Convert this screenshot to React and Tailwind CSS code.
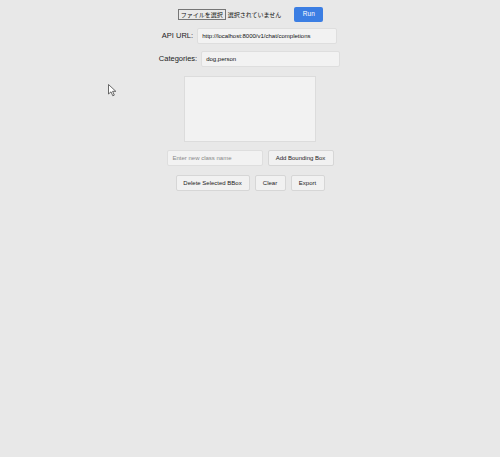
import React from "react";

export default function App() {
  const font = { fontFamily: '"Liberation Sans", Arial, "Noto Sans CJK JP", sans-serif' };
  return (
    <div className="relative w-[500px] h-[457px] bg-[#e8e8e8] text-[#222]" style={font}>
      <div className="flex flex-col items-center pt-[7px]">
        <div className="flex items-center h-[15px] ml-[1px]">
          <div className="flex items-center">
            <span className="h-[11px] px-[2px] flex items-center border border-[#767676] bg-[#e9e9e9] text-[6px] leading-none text-[#111]">ファイルを選択</span>
            <span className="ml-[2px] text-[6px] leading-none text-[#111]">選択されていません</span>
          </div>
          <button className="ml-[13px] w-[29px] h-[15px] rounded-[2px] bg-[#3b7ee3] text-white text-[6.5px] leading-none flex items-center justify-center">Run</button>
        </div>
        <div className="flex items-center mt-[6px] h-[16px] ml-[-1px]">
          <span className="text-[7.5px] text-[#222] mr-[4px]">API URL:</span>
          <div className="w-[140px] h-[16px] bg-[#f2f2f2] border border-[#dedede] rounded-[2px] flex items-center px-[4px] text-[6px] text-[#111]">http://localhost:8000/v1/chat/completions</div>
        </div>
        <div className="flex items-center mt-[7px] h-[16px] ml-[-1px]">
          <span className="text-[7.5px] text-[#222] mr-[4px]">Categories:</span>
          <div className="w-[139px] h-[16px] bg-[#f2f2f2] border border-[#dedede] rounded-[2px] flex items-center px-[4px] text-[6px] text-[#111]">dog,person</div>
        </div>
        <div className="mt-[9px] w-[132px] h-[66px] bg-[#f2f2f2] border border-[#dcdcdc]"></div>
        <div className="flex items-center mt-[8px] gap-[5px]">
          <div className="w-[96px] h-[16px] bg-[#f2f2f2] border border-[#dedede] rounded-[2px] flex items-center px-[5px] text-[6px] text-[#888]">Enter new class name</div>
          <button className="w-[66px] h-[16px] bg-[#f1f1f1] border border-[#d6d6d6] rounded-[2px] flex items-center justify-center text-[6px] text-[#222]">Add Bounding Box</button>
        </div>
        <div className="flex items-center mt-[9px] gap-[5px]">
          <button className="w-[74px] h-[16px] bg-[#f1f1f1] border border-[#d6d6d6] rounded-[2px] flex items-center justify-center text-[6px] text-[#222]">Delete Selected BBox</button>
          <button className="w-[31px] h-[16px] bg-[#f1f1f1] border border-[#d6d6d6] rounded-[2px] flex items-center justify-center text-[6px] text-[#222]">Clear</button>
          <button className="w-[34px] h-[16px] bg-[#f1f1f1] border border-[#d6d6d6] rounded-[2px] flex items-center justify-center text-[6px] text-[#222]">Export</button>
        </div>
      </div>
      <svg className="absolute left-[108px] top-[84px]" width="9" height="13" viewBox="0 0 9 13">
        <path d="M0.5 0.5 L0.5 10 L3 7.8 L4.8 11.8 L6.3 11.1 L4.6 7.3 L7.8 7.3 Z" fill="#fff" stroke="#444" strokeWidth="0.8" />
      </svg>
    </div>
  );
}
